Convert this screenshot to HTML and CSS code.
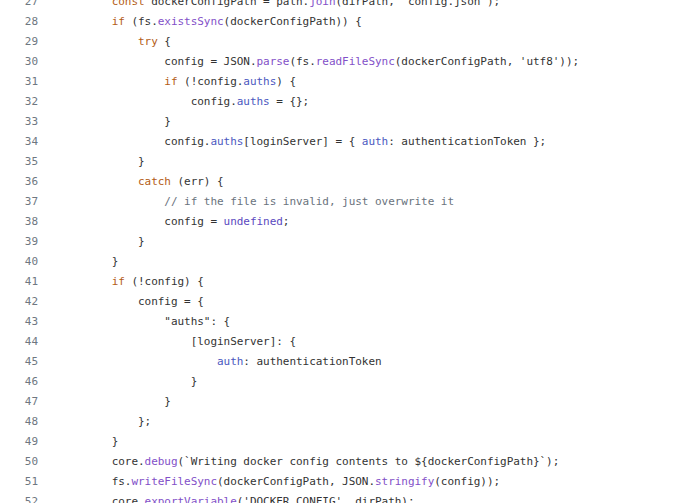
FILE: index.html
```html
<!DOCTYPE html>
<html>
<head>
<meta charset="utf-8">
<link rel="stylesheet" href="styles.css">
</head>
<body>
<div class="code">
<div class="row"><span class="ln">27</span><span class="src">        <span class="kw">const</span> dockerConfigPath = path.<span class="fn">join</span>(dirPath, 'config.json');</span></div>
<div class="row"><span class="ln">28</span><span class="src">        <span class="kw">if</span> (fs.<span class="fn">existsSync</span>(dockerConfigPath)) {</span></div>
<div class="row"><span class="ln">29</span><span class="src">            <span class="kw">try</span> {</span></div>
<div class="row"><span class="ln">30</span><span class="src">                config = JSON.<span class="fn">parse</span>(fs.<span class="fn">readFileSync</span>(dockerConfigPath, 'utf8'));</span></div>
<div class="row"><span class="ln">31</span><span class="src">                <span class="kw">if</span> (!config.<span class="pr">auths</span>) {</span></div>
<div class="row"><span class="ln">32</span><span class="src">                    config.<span class="pr">auths</span> = {};</span></div>
<div class="row"><span class="ln">33</span><span class="src">                }</span></div>
<div class="row"><span class="ln">34</span><span class="src">                config.<span class="pr">auths</span>[loginServer] = { <span class="pr">auth</span>: authenticationToken };</span></div>
<div class="row"><span class="ln">35</span><span class="src">            }</span></div>
<div class="row"><span class="ln">36</span><span class="src">            <span class="kw">catch</span> (err) {</span></div>
<div class="row"><span class="ln">37</span><span class="src">                <span class="cm">// if the file is invalid, just overwrite it</span></span></div>
<div class="row"><span class="ln">38</span><span class="src">                config = <span class="lit">undefined</span>;</span></div>
<div class="row"><span class="ln">39</span><span class="src">            }</span></div>
<div class="row"><span class="ln">40</span><span class="src">        }</span></div>
<div class="row"><span class="ln">41</span><span class="src">        <span class="kw">if</span> (!config) {</span></div>
<div class="row"><span class="ln">42</span><span class="src">            config = {</span></div>
<div class="row"><span class="ln">43</span><span class="src">                "auths": {</span></div>
<div class="row"><span class="ln">44</span><span class="src">                    [loginServer]: {</span></div>
<div class="row"><span class="ln">45</span><span class="src">                        <span class="pr">auth</span>: authenticationToken</span></div>
<div class="row"><span class="ln">46</span><span class="src">                    }</span></div>
<div class="row"><span class="ln">47</span><span class="src">                }</span></div>
<div class="row"><span class="ln">48</span><span class="src">            };</span></div>
<div class="row"><span class="ln">49</span><span class="src">        }</span></div>
<div class="row"><span class="ln">50</span><span class="src">        core.<span class="fn">debug</span>(`Writing docker config contents to ${dockerConfigPath}`);</span></div>
<div class="row"><span class="ln">51</span><span class="src">        fs.<span class="fn">writeFileSync</span>(dockerConfigPath, JSON.<span class="fn">stringify</span>(config));</span></div>
<div class="row"><span class="ln">52</span><span class="src">        core.<span class="fn">exportVariable</span>('DOCKER_CONFIG', dirPath);</span></div>
</div>
</body>
</html>
```
FILE: styles.css
```css
html, body {
  margin: 0;
  padding: 0;
  background: #ffffff;
  overflow: hidden;
}
.code {
  margin-top: -8px;
  font-family: "DejaVu Sans Mono", "Liberation Mono", monospace;
  font-size: 11px;
  letter-spacing: -0.04px;
  color: #333333;
}
.row {
  display: flex;
  height: 20px;
  line-height: 20px;
  white-space: pre;
}
.ln {
  width: 38px;
  text-align: right;
  color: #6e7781;
  flex: none;
}
.src {
  padding-left: 21px;
}
.kw { color: #b35c15; }
.fn { color: #8250c8; }
.pr { color: #4b58c0; }
.lit { color: #5a48c0; }
.cm { color: #6a737d; }
```
